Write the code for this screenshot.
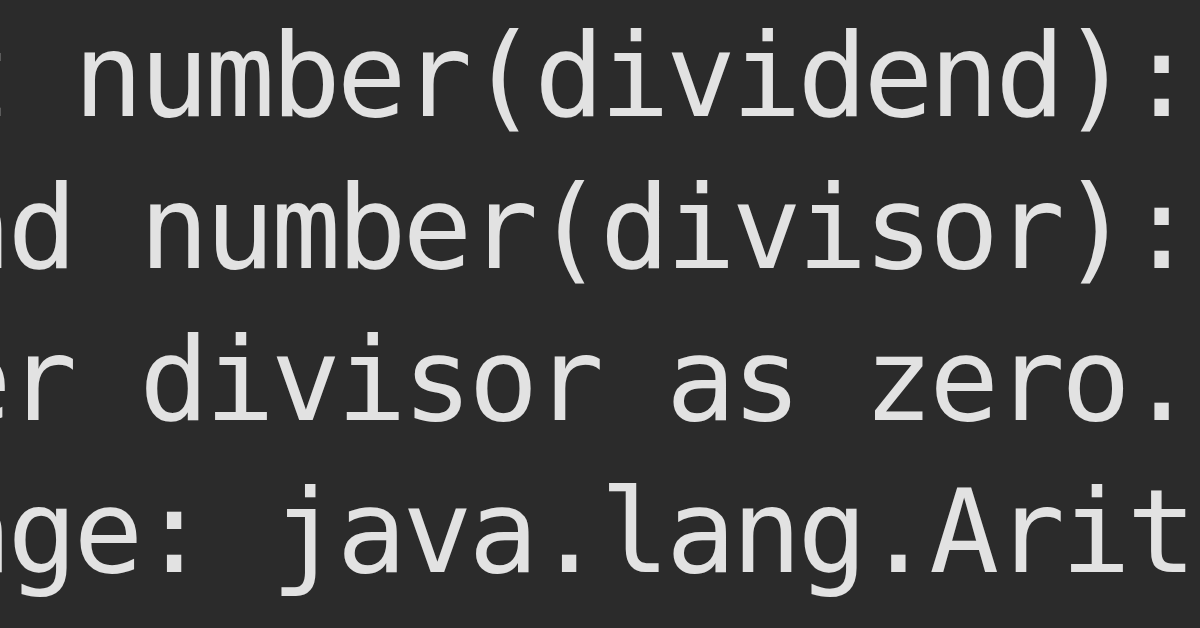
import React from "react";

const lines = [
  "    Enter first number(dividend):",
  "    Enter second number(divisor):",
  "    Do not enter divisor as zero.",
  "Exception message: java.lang.ArithmeticException: / by zero",
];

export default function App() {
  return (
    <div className="w-[1200px] h-[628px] overflow-hidden bg-[#2b2b2b]">
      <div
        className="ml-[-980px] whitespace-pre text-[116px] leading-[152px] tracking-[-4px] text-[#e2e2e2] blur-[0.6px]"
        style={{ fontFamily: '"DejaVu Sans Mono", "Liberation Mono", monospace' }}
      >
        {lines.map((l, i) => (
          <div key={i}>{l}</div>
        ))}
      </div>
    </div>
  );
}
